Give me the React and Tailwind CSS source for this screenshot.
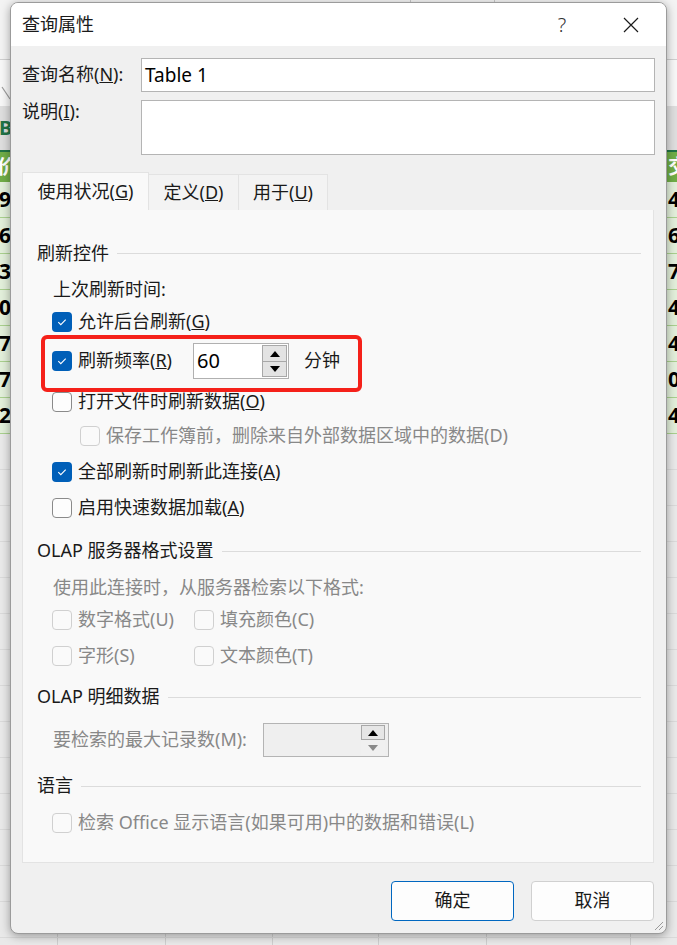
import React from 'react';

const leftVals = ['947', '605', '352', '006', '704', '738', '201'];
const rightVals = ['4', '6', '7', '4', '4', '0', '4'];

function Check({ checked, disabled }) {
  if (checked) {
    return (
      <span className="flex h-[20px] w-[20px] shrink-0 items-center justify-center rounded-[4px] bg-[#005fb8]">
        <svg width="20" height="20" viewBox="0 0 20 20">
          <path d="M6.3 10.2 8.8 12.7 13.7 7.6" fill="none" stroke="#fff" strokeWidth="1.1" />
        </svg>
      </span>
    );
  }
  return (
    <span
      className={`h-[20px] w-[20px] shrink-0 rounded-[4px] border ${
        disabled ? 'border-[#d0d0d0] bg-[#fafafa]' : 'border-[#8a8a8a] bg-[#fdfdfd]'
      }`}
    />
  );
}

function Option({ checked, disabled, children, className = '' }) {
  return (
    <div className={`flex items-center gap-[6px] ${disabled ? 'text-[#888888]' : 'text-[#1a1a1a]'} ${className}`}>
      <Check checked={checked} disabled={disabled} />
      <span className="whitespace-nowrap">{children}</span>
    </div>
  );
}

function GroupTitle({ children, className = '' }) {
  return (
    <div className={`flex items-center gap-[8px] pl-[14px] pr-[12px] text-[#1a1a1a] ${className}`}>
      <span className="whitespace-nowrap">{children}</span>
      <div className="h-px flex-1 bg-[#dcdcdc]" />
    </div>
  );
}

function Up({ color = '#000' }) {
  return (
    <svg width="10" height="6" viewBox="0 0 10 6">
      <path d="M0 6 5 0 10 6Z" fill={color} />
    </svg>
  );
}

function Down({ color = '#000' }) {
  return (
    <svg width="10" height="6" viewBox="0 0 10 6">
      <path d="M0 0 5 6 10 0Z" fill={color} />
    </svg>
  );
}

export default function App() {
  return (
    <div className="relative h-[945px] w-[677px] overflow-hidden bg-white font-['Noto_Sans','Noto_Sans_CJK_SC',sans-serif] text-[18px] leading-[1.3]">
      {/* spreadsheet behind the dialog */}
      <div className="flex flex-col">
        <div className="flex h-[60px] border-b border-[#cfcfcf] bg-[#f3f3f3]">
          <div className="ml-[410px] h-full w-[85px] border-x border-[#c8c8c8]" />
        </div>
        <div className="relative h-[46px] bg-[#f7f7f7]">
          <svg className="absolute left-[1px] top-[26px]" width="10" height="14" viewBox="0 0 10 14">
            <path d="M1 1 9 13" stroke="#9a9a9a" strokeWidth="1.2" />
          </svg>
        </div>
        <div className="flex h-[46px] items-center justify-between border-b-2 border-[#217346] bg-[#dedede] font-bold text-[#217346]">
          <span className="-ml-[1px] text-[20px]">B</span>
          <span className="w-[9px]" />
        </div>
        <div className="flex h-[30px] items-center justify-between bg-[#70ad47] font-bold text-white">
          <span className="-ml-[3px] text-[20px]">价格</span>
          <span className="w-[9px] whitespace-nowrap text-[20px]">交易</span>
        </div>
        {leftVals.map((v, i) => (
          <div
            key={i}
            className="flex h-[36px] items-center justify-between border-b border-[#a9d08e] bg-[#e2efda] text-[21px] font-bold text-black"
          >
            <span className="-ml-[1px]">{v}</span>
            <span className="w-[9px] whitespace-nowrap">{rightVals[i]}</span>
          </div>
        ))}
        {[...Array(15)].map((_, i) => (
          <div key={i} className="flex h-[36px] border-b border-[#dadada] bg-[#e9e9e9]">
            <div className="w-[58px] border-r border-[#cfcfcf]" />
            <div className="w-[108px] border-r border-[#cfcfcf]" />
            <div className="w-[107px] border-r border-[#cfcfcf]" />
            <div className="w-[106px] border-r border-[#cfcfcf]" />
            <div className="w-[108px] border-r border-[#cfcfcf]" />
            <div className="w-[144px] border-r border-[#cfcfcf]" />
          </div>
        ))}
      </div>

      {/* dialog */}
      <div className="absolute left-[10px] top-[2px] flex h-[932px] w-[657px] flex-col overflow-hidden rounded-[8px] border border-[#9b9b9b] bg-[#f0f0f0] shadow-[0_2px_10px_rgba(0,0,0,0.35)]">
        <div className="flex h-[43px] shrink-0 items-center bg-white pl-[11px] text-[#1a1a1a]">
          <span>查询属性</span>
          <div className="ml-auto flex items-center gap-[23px] pr-[12px]">
            <span className="w-[46px] text-center text-[20px] font-light text-[#333]">?</span>
            <span className="flex w-[46px] justify-center">
              <svg width="16" height="16" viewBox="0 0 16 16">
                <path d="M1 1 15 15M15 1 1 15" stroke="#1a1a1a" strokeWidth="1.2" />
              </svg>
            </span>
          </div>
        </div>

        <div className="flex flex-1 flex-col px-[11px] pt-[12px]">
          <div className="flex items-center">
            <span className="w-[119px] text-[#1a1a1a]">
              查询名称(<u>N</u>):
            </span>
            <div className="flex h-[34px] flex-1 items-center border border-[#b4b4b4] bg-white pl-[3px] text-[19px] text-black">
              Table 1
            </div>
          </div>
          <div className="mt-[8px] flex items-start">
            <span className="w-[119px] pt-[0px] text-[#1a1a1a]">
              说明(<u>I</u>):
            </span>
            <div className="h-[55px] flex-1 border border-[#b4b4b4] bg-white" />
          </div>

          <div className="mt-[17px] flex items-end text-[#1a1a1a]">
            <div className="flex h-[38px] w-[127px] items-center justify-center border-x border-t border-[#e3e3e3] bg-[#f9f9f9]">
              使用状况(<u>G</u>)
            </div>
            <div className="flex h-[36px] w-[90px] items-center justify-center border-r border-t border-[#e3e3e3] bg-[#f3f3f3]">
              定义(<u>D</u>)
            </div>
            <div className="flex h-[36px] w-[89px] items-center justify-center border-r border-t border-[#e3e3e3] bg-[#f3f3f3]">
              用于(<u>U</u>)
            </div>
          </div>

          <div className="relative flex h-[653px] w-[632px] flex-col border border-t-0 border-[#e3e3e3] bg-[#f9f9f9] pt-[25px]">
            <GroupTitle className="h-[37px]">刷新控件</GroupTitle>
            <div className="flex flex-col pl-[29px]">
              <div className="flex h-[36px] items-center pl-[1px] text-[#1a1a1a]">上次刷新时间:</div>
              <Option checked className="h-[28px]">
                允许后台刷新(<u>G</u>)
              </Option>
              <div className="flex h-[50px] items-center">
                <Check checked />
                <span className="ml-[6px] w-[115px] whitespace-nowrap text-[#1a1a1a]">
                  刷新频率(<u>R</u>)
                </span>
                <div className="flex h-[36px] w-[96px] items-center border border-[#b0b0b0] bg-white">
                  <span className="flex-1 pl-[3px] text-[20px] text-black">60</span>
                  <div className="mr-[1px] flex w-[25px] flex-col">
                    <div className="flex h-[17px] items-center justify-center border border-[#a8a8a8] bg-[#e3e3e3]">
                      <Up />
                    </div>
                    <div className="flex h-[15px] items-center justify-center border border-t-0 border-[#a8a8a8] bg-[#e3e3e3]">
                      <Down />
                    </div>
                  </div>
                </div>
                <span className="ml-[15px] text-[#1a1a1a]">分钟</span>
              </div>
              <Option className="h-[32px]">
                打开文件时刷新数据(<u>O</u>)
              </Option>
              <Option disabled className="ml-[28px] h-[36px]">
                保存工作簿前，删除来自外部数据区域中的数据(D)
              </Option>
              <Option checked className="h-[36px]">
                全部刷新时刷新此连接(<u>A</u>)
              </Option>
              <Option className="h-[36px]">
                启用快速数据加载(<u>A</u>)
              </Option>
            </div>

            <GroupTitle className="mt-[6px] h-[38px]">OLAP 服务器格式设置</GroupTitle>
            <div className="flex flex-col pl-[29px]">
              <div className="flex h-[36px] items-center pl-[1px] text-[#888888]">使用此连接时，从服务器检索以下格式:</div>
              <div className="grid h-[28px] grid-cols-[142px_1fr] items-center">
                <Option disabled>数字格式(U)</Option>
                <Option disabled>填充颜色(C)</Option>
              </div>
              <div className="grid h-[44px] grid-cols-[142px_1fr] items-center">
                <Option disabled>字形(S)</Option>
                <Option disabled>文本颜色(T)</Option>
              </div>
            </div>

            <GroupTitle className="h-[38px]">OLAP 明细数据</GroupTitle>
            <div className="flex h-[48px] items-center pl-[29px]">
              <span className="w-[211px] whitespace-nowrap pl-[1px] text-[#888888]">要检索的最大记录数(M):</span>
              <div className="flex h-[34px] w-[126px] items-center border border-[#b4b4b4] bg-[#efefef]">
                <span className="flex-1" />
                <div className="mr-[3px] flex w-[24px] flex-col">
                  <div className="flex h-[15px] items-center justify-center border border-[#a8a8a8] bg-[#e6e6e6]">
                    <Up />
                  </div>
                  <div className="flex h-[15px] items-center justify-center bg-[#f0f0f0]">
                    <Down color="#8a8a8a" />
                  </div>
                </div>
              </div>
            </div>

            <GroupTitle className="h-[44px]">语言</GroupTitle>
            <div className="flex flex-col pl-[29px]">
              <Option disabled className="h-[30px]">
                检索 Office 显示语言(如果可用)中的数据和错误(L)
              </Option>
            </div>

            {/* annotation */}
            <div className="pointer-events-none absolute left-[18px] top-[125px] h-[57px] w-[321px] rounded-[6px] border-[4px] border-[#f5211a]" />
          </div>

          <div className="mt-[18px] flex justify-end gap-[17px] pr-[1px] text-[#1a1a1a]">
            <div className="flex h-[40px] w-[123px] items-center justify-center rounded-[4px] border border-[#0067c0] bg-[#fdfdfd]">
              确定
            </div>
            <div className="flex h-[40px] w-[123px] items-center justify-center rounded-[4px] border border-[#d0d0d0] bg-[#fdfdfd]">
              取消
            </div>
          </div>
        </div>

        <svg className="absolute bottom-[2px] right-[2px]" width="12" height="12" viewBox="0 0 12 12">
          <path d="M11 3 3 11M11 7 7 11" stroke="#9a9a9a" strokeWidth="1" />
        </svg>
      </div>
    </div>
  );
}
